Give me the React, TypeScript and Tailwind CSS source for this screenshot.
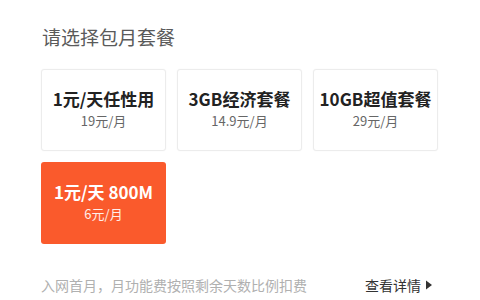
import React from "react";

const plans = [
  { name: "1元/天任性用", price: "19元/月" },
  { name: "3GB经济套餐", price: "14.9元/月" },
  { name: "10GB超值套餐", price: "29元/月" },
  { name: "1元/天 800M", price: "6元/月", active: true },
];

export default function App() {
  return (
    <div
      className="w-[480px] h-[300px] bg-white overflow-hidden pl-[41px] pr-[41px] pt-[24px]"
      style={{ fontFamily: '"Noto Sans CJK SC", "Noto Sans", sans-serif' }}
    >
      <h1 className="text-[19px] leading-[26px] text-[#5a5a5a] pl-[1px]">请选择包月套餐</h1>

      <div className="grid grid-cols-[125px_125px_125px] gap-[11px] mt-[19px]">
        {plans.map((p) => (
          <div
            key={p.name}
            className={`h-[82px] rounded-[3px] flex flex-col items-center justify-center pb-[3px] ${
              p.active
                ? "bg-[#fa5a2c] text-white"
                : "bg-white border border-[#ececec] shadow-[0_0_2px_rgba(0,0,0,0.04)]"
            }`}
          >
            <div
              className={`text-[17px] font-bold leading-[22px] ${
                p.active ? "text-white" : "text-[#222]"
              }`}
            >
              {p.name}
            </div>
            <div
              className={`text-[13px] leading-[18px] mt-[2px] ${
                p.active ? "text-white/90" : "text-[#666]"
              }`}
            >
              {p.price}
            </div>
          </div>
        ))}
      </div>

      <div className="flex items-center justify-between mt-[31px] text-[14px] leading-[20px]">
        <span className="text-[#b0b0b0]">入网首月，月功能费按照剩余天数比例扣费</span>
        <span className="flex items-center text-[#333] mr-[6px]">
          查看详情
          <svg width="8" height="10" viewBox="0 0 8 10" className="ml-[4px]">
            <path d="M1 0.5 L7 5 L1 9.5 Z" fill="#333" />
          </svg>
        </span>
      </div>
    </div>
  );
}
